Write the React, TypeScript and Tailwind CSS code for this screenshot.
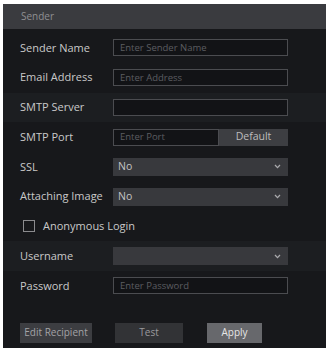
import React from 'react';

const Chevron = () => (
  <svg width="7" height="5" viewBox="0 0 7 5" className="shrink-0">
    <path d="M1 1 L3.5 3.6 L6 1" fill="none" stroke="#a9a9ac" strokeWidth="1.3" />
  </svg>
);

const Label = ({ children }: { children: React.ReactNode }) => (
  <span className="w-[93px] shrink-0 text-[11px] text-[#c9c9c9] whitespace-nowrap">{children}</span>
);

const TextBox = ({ placeholder, width = 'w-[175px]' }: { placeholder?: string; width?: string }) => (
  <div className={`${width} h-[17px] border border-[#4b4c50] bg-[#121316] flex items-center px-[6px]`}>
    <span className="text-[9.5px] text-[#5c5d61] whitespace-nowrap">{placeholder}</span>
  </div>
);

const Select = ({ value }: { value?: string }) => (
  <div className="w-[175px] h-[18px] bg-[#38393d] flex items-center justify-between pl-[5px] pr-[7px]">
    <span className="text-[10.5px] text-[#c4c4c4]">{value}</span>
    <Chevron />
  </div>
);

const Row = ({ children, shade }: { children: React.ReactNode; shade?: boolean }) => (
  <div className={`h-[29.75px] flex items-center pl-[17px] ${shade ? 'bg-[#1c1e21]' : ''}`}>{children}</div>
);

export default function App() {
  return (
    <div
      className="w-[326px] h-[348px] bg-white pt-[4px] pl-[3px]"
      style={{ fontFamily: '"Open Sans", "Noto Sans", sans-serif' }}
    >
      <div className="h-full bg-[#17181b] flex flex-col">
        <div className="h-[25px] bg-[#3a3b3f] flex items-center pl-[18px]">
          <span className="text-[10px] text-[#8f8f92]">Sender</span>
        </div>

        <div className="pt-[4px]">
          <Row>
            <Label>Sender Name</Label>
            <TextBox placeholder="Enter Sender Name" />
          </Row>
          <Row>
            <Label>Email Address</Label>
            <TextBox placeholder="Enter Address" />
          </Row>
          <Row shade>
            <Label>SMTP Server</Label>
            <TextBox />
          </Row>
          <Row>
            <Label>SMTP Port</Label>
            <div className="flex items-center">
              <TextBox placeholder="Enter Port" width="w-[106px]" />
              <div className="w-[69px] h-[17px] bg-[#3d3e42] flex items-center justify-center text-[10.5px] text-[#bdbdbd]">
                Default
              </div>
            </div>
          </Row>
          <Row>
            <Label>SSL</Label>
            <Select value="No" />
          </Row>
          <Row>
            <Label>Attaching Image</Label>
            <Select value="No" />
          </Row>
          <Row>
            <div className="flex items-center gap-[8px] pl-[3px]">
              <div className="w-[12px] h-[12px] border border-[#8b8b8e]" />
              <span className="text-[11px] text-[#c9c9c9]">Anonymous Login</span>
            </div>
          </Row>
          <Row shade>
            <Label>Username</Label>
            <Select />
          </Row>
          <Row>
            <Label>Password</Label>
            <TextBox placeholder="Enter Password" />
          </Row>
        </div>

        <div className="flex items-center pl-[17px] mt-[22px]">
          <div className="w-[72px] h-[20px] bg-[#3c3d41] flex items-center justify-center text-[10px] text-[#a3a3a6]">
            Edit Recipient
          </div>
          <div className="w-[68px] h-[20px] ml-[23px] bg-[#323336] flex items-center justify-center text-[10px] text-[#9a9a9d]">
            Test
          </div>
          <div className="w-[55px] h-[20px] ml-[24px] bg-[#67686c] flex items-center justify-center text-[10px] text-[#e6e6e6]">
            Apply
          </div>
        </div>
      </div>
    </div>
  );
}
